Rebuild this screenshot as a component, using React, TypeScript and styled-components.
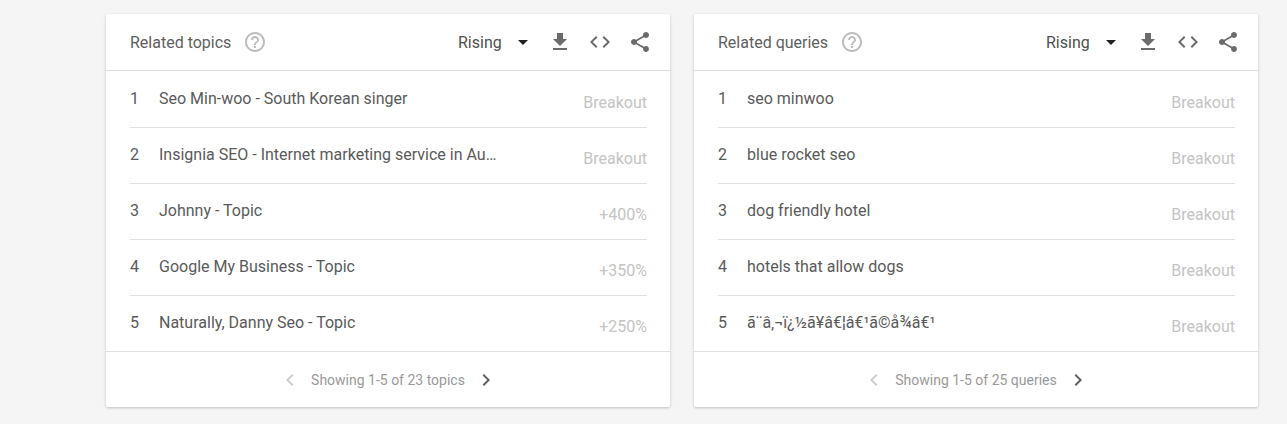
import React from "react"
import styled, { createGlobalStyle } from "styled-components"

interface Row {
    label: string
    value: string
}

const GlobalStyle = createGlobalStyle`
    html, body {
        margin: 0;
        height: 100%;
        background: #f5f5f5;
        font-family: Roboto, "Liberation Sans", sans-serif;
        overflow: hidden;
    }
`

const Page = styled.div`
    display: flex;
    gap: 24px;
    padding: 14px 0 0 106px;
`

const Card = styled.section`
    width: 564px;
    height: 393px;
    flex: none;
    background: #fff;
    border-radius: 2px;
    box-shadow: 0 1px 3px rgba(0, 0, 0, 0.22);
    display: flex;
    flex-direction: column;
`

const Header = styled.header`
    height: 57px;
    box-sizing: border-box;
    border-bottom: 1px solid #e0e0e0;
    display: flex;
    align-items: center;
    padding: 0 18px 0 24px;
`

const Title = styled.h2`
    margin: 0;
    font-size: 16px;
    font-weight: 400;
    color: #5f5f5f;
`

const Help = styled.svg`
    width: 24px;
    height: 24px;
    margin-left: 12px;
    fill: #bdbdbd;
`

const Spacer = styled.div`
    flex: 1;
`

const Select = styled.div`
    display: flex;
    align-items: center;
    width: 70px;
    font-size: 16px;
    color: #505050;
`

const Caret = styled.span`
    width: 0;
    height: 0;
    margin-left: auto;
    border-left: 5px solid transparent;
    border-right: 5px solid transparent;
    border-top: 5px solid #212121;
`

const Tools = styled.div`
    display: flex;
    align-items: center;
    gap: 16px;
    margin-left: 20px;
`

const Tool = styled.svg`
    width: 24px;
    height: 24px;
    fill: #6b6b6b;
    display: block;
`

const List = styled.ol`
    list-style: none;
    margin: 0;
    padding: 0 23px 0 24px;
    flex: 1;
`

const Item = styled.li`
    height: 56px;
    box-sizing: border-box;
    display: flex;
    align-items: center;
    border-bottom: 1px solid #e0e0e0;
    font-size: 16px;
    &:first-child {
        height: 57px;
    }
    &:last-child {
        height: 55px;
        border-bottom: none;
    }
`

const Rank = styled.span`
    width: 29px;
    flex: none;
    color: #5a5a5a;
    position: relative;
    top: -1px;
`

const Label = styled.span`
    color: #5a5a5a;
    white-space: nowrap;
    position: relative;
    top: -1px;
`

const Value = styled.span`
    margin-left: auto;
    color: #c4c4c4;
    position: relative;
    top: 3px;
`

const Footer = styled.footer`
    height: 56px;
    box-sizing: border-box;
    border-top: 1px solid #e0e0e0;
    display: flex;
    align-items: center;
    justify-content: center;
    font-size: 14px;
    color: #9a9a9a;
`

const Chevron = styled.svg<{ $active?: boolean }>`
    width: 24px;
    height: 24px;
    margin: 0 ${props => props.$active ? "-1px" : "9px"} 0 ${props => props.$active ? "9px" : "-1px"};
    fill: ${props => props.$active ? "#5f5f5f" : "#cfcfcf"};
`

const QuestionIcon = () => (
    <Help viewBox="0 0 24 24">
        <path d="M11 18h2v-2h-2v2zm1-16C6.48 2 2 6.48 2 12s4.48 10 10 10 10-4.48 10-10S17.52 2 12 2zm0 18c-4.41 0-8-3.59-8-8s3.59-8 8-8 8 3.59 8 8-3.59 8-8 8zm0-14c-2.21 0-4 1.79-4 4h2c0-1.1.9-2 2-2s2 .9 2 2c0 2-3 1.75-3 5h2c0-2.25 3-2.5 3-5 0-2.21-1.79-4-4-4z" />
    </Help>
)

const Actions = () => (
    <Tools>
        <Tool viewBox="0 0 24 24">
            <path d="M19 9h-4V3H9v6H5l7 7 7-7zM5 18v2h14v-2H5z" />
        </Tool>
        <Tool viewBox="0 0 24 24">
            <path d="M9.4 16.6L4.8 12l4.6-4.6L8 6l-6 6 6 6 1.4-1.4zm5.2 0l4.6-4.6-4.6-4.6L16 6l6 6-6 6-1.4-1.4z" />
        </Tool>
        <Tool viewBox="0 0 24 24">
            <path d="M18 16.08c-.76 0-1.44.3-1.96.77L8.91 12.7c.05-.23.09-.46.09-.7s-.04-.47-.09-.7l7.05-4.11c.54.5 1.25.81 2.04.81 1.66 0 3-1.34 3-3s-1.34-3-3-3-3 1.34-3 3c0 .24.04.47.09.7L8.04 9.81C7.5 9.31 6.79 9 6 9c-1.66 0-3 1.34-3 3s1.34 3 3 3c.79 0 1.5-.31 2.04-.81l7.12 4.16c-.05.21-.08.43-.08.65 0 1.61 1.31 2.92 2.92 2.92s2.92-1.31 2.92-2.92-1.31-2.92-2.92-2.92z" />
        </Tool>
    </Tools>
)

const Panel: React.FC<{ title: string; footer: string; rows: Row[] }> = ({ title, footer, rows }) => (
    <Card>
        <Header>
            <Title>{title}</Title>
            <QuestionIcon />
            <Spacer />
            <Select>Rising<Caret /></Select>
            <Actions />
        </Header>
        <List>
            {rows.map((row, i) => (
                <Item key={i}>
                    <Rank>{i + 1}</Rank>
                    <Label>{row.label}</Label>
                    <Value>{row.value}</Value>
                </Item>
            ))}
        </List>
        <Footer>
            <Chevron viewBox="0 0 24 24">
                <path d="M15.4 7.4L14 6l-6 6 6 6 1.4-1.4L10.8 12z" />
            </Chevron>
            {footer}
            <Chevron $active viewBox="0 0 24 24">
                <path d="M10 6L8.6 7.4 13.2 12l-4.6 4.6L10 18l6-6z" />
            </Chevron>
        </Footer>
    </Card>
)

const topics: Row[] = [
    { label: "Seo Min-woo - South Korean singer", value: "Breakout" },
    { label: "Insignia SEO - Internet marketing service in Au…", value: "Breakout" },
    { label: "Johnny - Topic", value: "+400%" },
    { label: "Google My Business - Topic", value: "+350%" },
    { label: "Naturally, Danny Seo - Topic", value: "+250%" },
]

const queries: Row[] = [
    { label: "seo minwoo", value: "Breakout" },
    { label: "blue rocket seo", value: "Breakout" },
    { label: "dog friendly hotel", value: "Breakout" },
    { label: "hotels that allow dogs", value: "Breakout" },
    { label: "ã¨â‚¬ï¿½ã¥â€¦â€¹ã©å¾â€¹", value: "Breakout" },
]

const App = () => (
    <>
        <GlobalStyle />
        <Page>
            <Panel title="Related topics" footer="Showing 1-5 of 23 topics" rows={topics} />
            <Panel title="Related queries" footer="Showing 1-5 of 25 queries" rows={queries} />
        </Page>
    </>
)

export default App
